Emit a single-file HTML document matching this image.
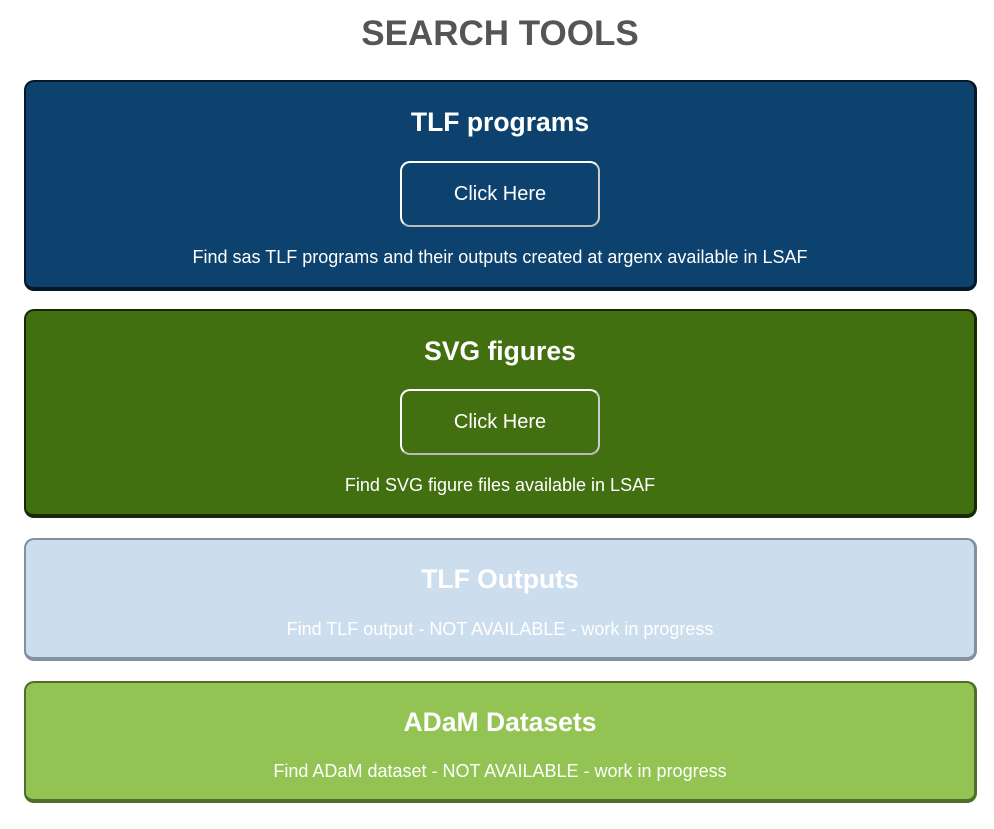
<!DOCTYPE html>
<html><head><style>
body{margin:0;width:994px;height:829px;background:#fff;font-family:"Liberation Sans",Arial,sans-serif;position:relative;overflow:hidden}
h1{position:absolute;top:14px;left:0;width:1000px;margin:0;text-align:center;font-size:35px;font-weight:bold;color:#555;line-height:40px}
.card{position:absolute;left:24px;width:953px;border-radius:10px;box-sizing:border-box;border:2px solid;border-bottom-width:4px;border-right-width:3px;color:#fff;text-align:center}
.t{position:absolute;left:0;width:100%;font-size:26.5px;font-weight:bold;line-height:30px}
.d{position:absolute;left:0;width:100%;font-size:18px;line-height:20px}
.b{position:absolute;left:374px;width:196px;height:62px;border:2px solid #fff;border-bottom-color:#bbb;border-right-color:#ccc;border-radius:10px;font-size:20px;line-height:62px}
</style></head><body>
<h1>SEARCH TOOLS</h1>
<div class="card" style="top:80px;height:211px;background:#0d426e;border-color:#04182a">
<div class="t" style="top:25px">TLF programs</div>
<div class="b" style="top:79px">Click Here</div>
<div class="d" style="top:165px">Find sas TLF programs and their outputs created at argenx available in LSAF</div>
</div>
<div class="card" style="top:309px;height:209px;background:#426f10;border-color:#182a05">
<div class="t" style="top:25px">SVG figures</div>
<div class="b" style="top:78px">Click Here</div>
<div class="d" style="top:164px">Find SVG figure files available in LSAF</div>
</div>
<div class="card" style="top:538px;height:123px;background:#ccdded;border-color:#8390a0">
<div class="t" style="top:24px">TLF Outputs</div>
<div class="d" style="top:79px">Find TLF output - NOT AVAILABLE - work in progress</div>
</div>
<div class="card" style="top:681px;height:122px;background:#92c353;border-color:#4f6e2a">
<div class="t" style="top:24px">ADaM Datasets</div>
<div class="d" style="top:78px">Find ADaM dataset - NOT AVAILABLE - work in progress</div>
</div>
</body></html>
